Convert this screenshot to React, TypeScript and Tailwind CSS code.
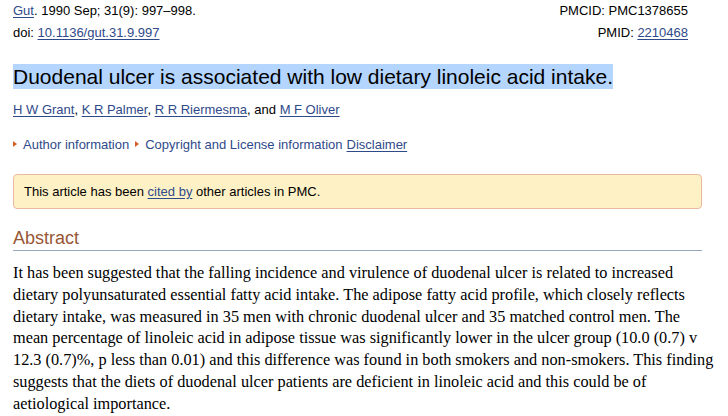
import React from 'react';

const Link: React.FC<{ children: React.ReactNode }> = ({ children }) => (
  <a href="#" className="text-[#2f4a8a] underline underline-offset-2">{children}</a>
);

const Bullet: React.FC = () => (
  <span className="inline-block w-0 h-0 mr-[6px] align-middle border-y-[3px] border-y-transparent border-l-[4px] border-l-[#d3602b] relative top-[-1px]" />
);

const abstractLines = [
  'It has been suggested that the falling incidence and virulence of duodenal ulcer is related to increased',
  'dietary polyunsaturated essential fatty acid intake. The adipose fatty acid profile, which closely reflects',
  'dietary intake, was measured in 35 men with chronic duodenal ulcer and 35 matched control men. The',
  'mean percentage of linoleic acid in adipose tissue was significantly lower in the ulcer group (10.0 (0.7) v',
  '12.3 (0.7)%, p less than 0.01) and this difference was found in both smokers and non-smokers. This finding',
  'suggests that the diets of duodenal ulcer patients are deficient in linoleic acid and this could be of',
  'aetiological importance.',
];

const App: React.FC = () => {
  return (
    <div className="w-[728px] h-[416px] overflow-hidden bg-white text-black pl-[13px] font-['Liberation_Sans',Arial,sans-serif]">
      {/* Citation header */}
      <div className="flex justify-between w-[675px] text-[13px] leading-[22px]">
        <div>
          <div><Link>Gut</Link>. 1990 Sep; 31(9): 997–998.</div>
          <div>doi: <Link>10.1136/gut.31.9.997</Link></div>
        </div>
        <div className="text-right">
          <div>PMCID: PMC1378655</div>
          <div>PMID: <Link>2210468</Link></div>
        </div>
      </div>

      {/* Title */}
      <h1 className="mt-[20px] text-[21px] leading-[26px]">
        <span className="bg-[#b4d5fe] py-[1px]">Duodenal ulcer is associated with low dietary linoleic acid intake.</span>
      </h1>

      {/* Authors */}
      <div className="mt-[11px] text-[13px] leading-[18px]">
        <Link>H W Grant</Link>, <Link>K R Palmer</Link>, <Link>R R Riermesma</Link>, and <Link>M F Oliver</Link>
      </div>

      <div className="mt-[17px] text-[13px] leading-[18px] flex items-center">
        <Bullet />
        <span className="text-[#2f4a8a]">Author information</span>
        <span className="ml-[6px]" />
        <Bullet />
        <span className="text-[#2f4a8a]">Copyright and License information</span>
        <span className="ml-[4px]"><Link>Disclaimer</Link></span>
      </div>

      {/* Cited-by notice */}
      <div className="mt-[20px] w-[689px] h-[35px] flex items-center px-[10px] bg-[#fff1c6] border border-[#e9b9a0] rounded-[4px] text-[13px]">
        <span>This article has been <Link>cited by</Link> other articles in PMC.</span>
      </div>

      {/* Abstract */}
      <h2 className="mt-[18px] w-[689px] text-[18px] leading-[22px] text-[#985735] border-b border-[#97a8bf] pb-[1px]">Abstract</h2>
      <p className="mt-[11px] w-[715px] whitespace-nowrap text-[16.3px] leading-[21.8px] font-['Liberation_Serif','Times_New_Roman',serif]">
        {abstractLines.map((line, i) => (
          <React.Fragment key={i}>
            {line}
            {i < abstractLines.length - 1 && <br />}
          </React.Fragment>
        ))}
      </p>
    </div>
  );
};

export default App;
